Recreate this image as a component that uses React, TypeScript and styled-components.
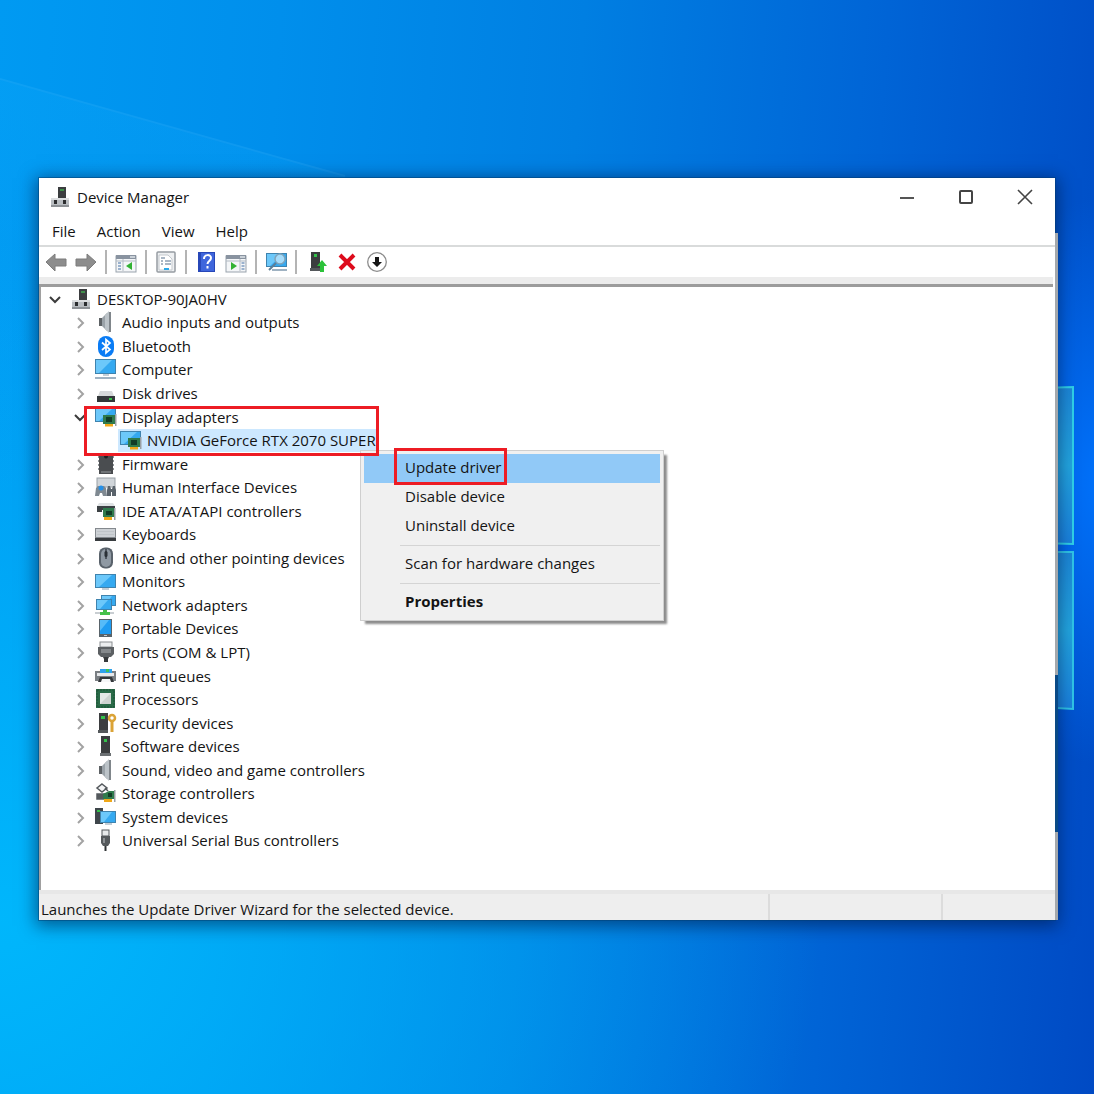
import React from "react";
import styled, { createGlobalStyle, css } from "styled-components";

const GlobalStyle = createGlobalStyle`
  *, *::before, *::after { box-sizing: border-box; }
  body {
    margin: 0;
    font-family: "Open Sans", "Noto Sans", sans-serif;
    font-size: 15px;
    line-height: 20px;
    color: #141414;
  }
  button { font: inherit; color: inherit; border: 0; background: none; padding: 0; margin: 0; }
  ul { list-style: none; margin: 0; padding: 0; }
`;

/* ---------- desktop ---------- */

const Desktop = styled.div`
  position: relative;
  display: flex;
  min-height: 100vh;
  padding: 178px 39px 174px;
  overflow: hidden;
  background:
    radial-gradient(ellipse 14% 26% at 101% 44%, rgba(0, 116, 255, 0.95), rgba(0, 108, 255, 0) 100%),
    radial-gradient(ellipse 75% 62% at 0% 84%, rgba(0, 184, 252, 0.95), rgba(0, 170, 250, 0) 100%),
    linear-gradient(94deg, #009af2 0%, #008fec 24%, #007fe2 50%, #0064d6 76%, #004ac4 100%);
`;

const Wallpaper = styled.svg`
  position: absolute;
  inset: 0;
  width: 100%;
  height: 100%;
`;

const Window = styled.main`
  position: relative;
  display: flex;
  flex-direction: column;
  flex: 1;
  min-width: 0;
  background: #ffffff;
  box-shadow: 0 0 0 1px rgba(0, 60, 110, 0.45), 0 3px 16px 3px rgba(0, 20, 60, 0.55);
`;

const BehindWindow = styled.div`
  position: absolute;
  top: 55px;
  right: -3px;
  bottom: 0;
  width: 3px;
  background: linear-gradient(#a4a8ac 0 442px, #0a4a86 442px 599px, #a4a8ac 599px);
`;

/* ---------- title bar and menu bar ---------- */

const TitleBar = styled.header`
  display: flex;
  align-items: center;
  height: 37px;
  padding-left: 10px;
`;

const Title = styled.h1`
  flex: 1;
  margin: 0 0 0 6px;
  font-size: 15px;
  font-weight: 400;
`;

const CaptionButton = styled.button`
  display: grid;
  place-items: center;
  width: 59px;
  height: 36px;

  &:last-child { margin-right: 1px; }
`;

const MenuBar = styled.nav`
  display: flex;
  gap: 21px;
  height: 32px;
  padding-left: 13px;
  border-bottom: 2px solid #d9dbdb;
`;

const MenuButton = styled.button`
  height: 31px;
`;

/* ---------- toolbar ---------- */

const Toolbar = styled.div`
  display: flex;
  align-items: center;
  height: 30px;
  padding-left: 2px;
`;

const ToolButton = styled.button`
  display: grid;
  place-items: center;
  width: 30px;
  height: 28px;
`;

const ToolSeparator = styled.span`
  width: 2px;
  height: 24px;
  margin: 0 4px;
  background: #b4b4b4;
`;

const Band = styled.div`
  height: 10px;
  margin-right: 2px;
  background: #ececec;
  border-bottom: 3px solid #9c9c9c;
`;

/* ---------- device tree ---------- */

const Panel = styled.section`
  flex: 1;
  border-left: 2px solid #a0a0a0;
`;

const Tree = styled.ul`
  display: flex;
  flex-direction: column;
  height: 565px;
`;

const Item = styled.li`
  flex: 1;
  display: flex;
`;

const Group = styled.li`
  position: relative;
  flex: 2;
  display: flex;
  flex-direction: column;
`;

const SubList = styled.ul`
  flex: 1;
  display: flex;
`;

const Row = styled.div<{ $level: number }>`
  flex: 1;
  display: flex;
  align-items: center;
  padding-left: ${(p) => 4 + p.$level * 25}px;
`;

const Toggle = styled.button`
  display: grid;
  place-items: center;
  width: 20px;
  height: 20px;
`;

const ToggleSpace = styled.span`
  width: 20px;
`;

const DeviceButton = styled.button<{ $selected?: boolean }>`
  display: flex;
  align-items: center;
  gap: 5px;
  height: 23px;
  margin-left: 3px;
  padding: 0 2px;
  white-space: nowrap;
  ${(p) => p.$selected && css`background: #cce8ff;`}
`;

const Glyph = styled.svg.attrs({ viewBox: "0 0 22 22", "aria-hidden": true })`
  width: 22px;
  height: 22px;
  flex: none;
`;

const redOutline = css`
  position: absolute;
  border: 3px solid #ed1c24;
  pointer-events: none;
`;

const AdapterOutline = styled.span`
  ${redOutline}
  top: 1px;
  left: 43px;
  width: 295px;
  height: 50px;
  z-index: 2;
`;

/* ---------- context menu ---------- */

const ContextMenu = styled.div`
  position: absolute;
  top: 45px;
  left: 319px;
  z-index: 1;
  width: 304px;
  padding: 3px;
  background: #f0f0f0;
  border: 1px solid #cfcfcf;
  box-shadow: 4px 4px 2px -1px rgba(0, 0, 0, 0.45);
`;

const Command = styled.button<{ $active?: boolean; $bold?: boolean }>`
  position: relative;
  display: block;
  width: 100%;
  height: 29px;
  padding: 0 0 2px 41px;
  text-align: left;
  font-weight: ${(p) => (p.$bold ? 700 : 400)};
  background: ${(p) => (p.$active ? "#91c9f7" : "transparent")};
`;

const CommandOutline = styled.span`
  ${redOutline}
  top: -6px;
  left: 30px;
  width: 113px;
  height: 37px;
`;

const Divider = styled.hr`
  height: 1px;
  margin: 4px 0 4px 36px;
  border: 0;
  background: #d4d4d4;
`;

/* ---------- status bar ---------- */

const StatusBar = styled.footer`
  display: flex;
  height: 30px;
  background: #eeeeee;
  border-top: 4px solid #e7e7e7;
`;

const StatusText = styled.output`
  flex: 1;
  padding: 5px 0 0 2px;
`;

const StatusCell = styled.div<{ $width: number }>`
  width: ${(p) => p.$width}px;
  border-left: 2px solid #dcdcdc;
`;

/* ---------- drawings ---------- */

const ServerIcon = () => (
  <Glyph>
    <rect x="9" y="1" width="8" height="11" fill="#3b3d3f" />
    <rect x="11" y="3" width="4" height="2" fill="#3f8f4a" />
    <path d="M2 12h18v8H2z" fill="#b9bdc1" />
    <path d="M2 12h18v2H2z" fill="#dcdee0" />
    <path d="M2 19h18v2H2z" fill="#8e9296" />
    <rect x="5" y="14" width="3" height="4" fill="#2b2d2f" />
    <rect x="14" y="14" width="3" height="4" fill="#2b2d2f" />
  </Glyph>
);

const SpeakerIcon = () => (
  <Glyph>
    <path d="M4 7h4v8H4z" fill="#5d6265" />
    <path d="M7 7l5-5v18l-5-5z" fill="#9aa2a8" />
    <path d="M10 4l4-4v22l-4-4z" fill="#bcc3c8" />
    <path d="M14 1h2v20h-2z" fill="#80868b" />
  </Glyph>
);

const BluetoothIcon = () => (
  <Glyph>
    <rect x="3" y="1" width="16" height="21" rx="8" fill="#0a7cf5" />
    <path d="M7 7.500l8 7-4 3.500V4.500l4 3.500-8 7" fill="none" stroke="#fff" strokeWidth="1.700" />
  </Glyph>
);

const screen = (x: number, y: number, w: number, h: number) => (
  <>
    <rect x={x} y={y} width={w} height={h} fill="#3f83ae" />
    <rect x={x + 1} y={y + 1} width={w - 2} height={h - 2} fill="#35a9f0" />
    <path d={`M${x + 1} ${y + 1}h${w - 5}L${x + 4} ${y + h - 1}H${x + 1}z`} fill="#6cc8fa" />
  </>
);

const ComputerIcon = () => (
  <Glyph>
    {screen(0, 1, 21, 15)}
    <path d="M8 16h6v2H8z" fill="#c3ced6" />
    <path d="M0 19h21v2H0z" fill="#9fb2c2" />
  </Glyph>
);

const DiskIcon = () => (
  <Glyph>
    <path d="M5 9h12l2 5H3z" fill="#d6d8da" />
    <path d="M2 14h18v6H2z" fill="#33373a" />
    <rect x="14" y="16" width="3" height="2" fill="#38c14b" />
  </Glyph>
);

const board = (
  <>
    <rect x="8" y="9" width="12" height="9" fill="#2f7a4c" />
    <rect x="11" y="11" width="6" height="5" fill="#123d27" />
    <path d="M20 8h1.500v12H20z" fill="#9aa0a5" />
    <rect x="10" y="18" width="8" height="2.500" fill="#f0a818" />
  </>
);

const AdapterIcon = () => (
  <Glyph>
    {screen(0, 2, 21, 14)}
    {board}
  </Glyph>
);

const FirmwareIcon = () => (
  <Glyph>
    <rect x="4" y="1" width="14" height="20" fill="#4a4d50" />
    <path d="M3 4h1M3 8h1M3 12h1M3 16h1M18 4h1M18 8h1M18 12h1M18 16h1" stroke="#8d9194" strokeWidth="2" />
    <circle cx="11" cy="3.500" r="2" fill="#1d1f20" />
    <path d="M6 19h10" stroke="#7c8083" strokeWidth="1.500" />
  </Glyph>
);

const HidIcon = () => (
  <Glyph>
    <rect x="2" y="2" width="18" height="9" fill="#d0d5d9" stroke="#9aa1a7" />
    <path d="M0 20l1-8 2-2h6l2 2 1 8H8l-1-3H5l-1 3z" fill="#7f8991" />
    <circle cx="6" cy="12" r="2.500" fill="#2490e8" />
    <path d="M13 10h2l1 3h1l1-3h2l1 4v6h-4v-4h-1v4h-4v-6z" fill="#5a636b" />
  </Glyph>
);

const IdeIcon = () => (
  <Glyph>
    <path d="M4 3h14l2 3H2z" fill="#dfe2e4" />
    <path d="M2 6h18v4H7v2H2z" fill="#3c4144" />
    <rect x="8" y="8" width="11" height="9" fill="#2f7a4c" />
    <rect x="11" y="11" width="6" height="4" fill="#123d27" />
    <path d="M19 8h1.500v12H19z" fill="#9aa0a5" />
    <rect x="9" y="17" width="8" height="3" fill="#f0a818" />
  </Glyph>
);

const KeyboardIcon = () => (
  <Glyph>
    <rect x="0" y="5" width="21" height="13" fill="#84898e" />
    <rect x="1" y="6" width="19" height="8" fill="#cdd1d5" />
    <path d="M2 8.500h17M2 11.500h17" stroke="#bfc4c8" />
    <path d="M0 15h21v3H0z" fill="#383c3f" />
  </Glyph>
);

const MouseIcon = () => (
  <Glyph>
    <rect x="4" y="0.500" width="14" height="21" rx="6" fill="#59626b" />
    <rect x="6" y="2" width="10" height="18" rx="5" fill="#8f99a3" />
    <path d="M11 2v10" stroke="#3a4148" strokeWidth="1.500" />
    <rect x="9.500" y="4" width="3" height="6" rx="1.500" fill="#2a3036" />
  </Glyph>
);

const MonitorIcon = () => (
  <Glyph>
    {screen(0, 4, 21, 14)}
    <path d="M7 18h7v2H7z" fill="#c3ced6" />
  </Glyph>
);

const NetworkIcon = () => (
  <Glyph>
    {screen(6, 1, 15, 11)}
    {screen(1, 5, 16, 11)}
    <path d="M8 16h4v2h3v3H5v-3h3z" fill="#45c14a" />
    <path d="M0 18h5v2H0zM15 18h4v2h-4z" fill="#c9ced2" />
  </Glyph>
);

const PortableIcon = () => (
  <Glyph>
    <rect x="4" y="2" width="13" height="18" fill="#59636a" />
    <rect x="5" y="3" width="11" height="14" fill="#1f9cf2" />
    <path d="M5 3h9L5 14z" fill="#56bbf8" />
    <rect x="9" y="18" width="3" height="1" fill="#c6cbd0" />
  </Glyph>
);

const PortsIcon = () => (
  <Glyph>
    <rect x="5" y="1" width="12" height="5" fill="#eceeef" stroke="#8a8e91" />
    <path d="M3 6h16v7l-3 3H6l-3-3z" fill="#5c6063" />
    <path d="M6 8h10v4H6z" fill="#85898c" />
    <path d="M8 16h6l-1 2v3H9v-3z" fill="#36393b" />
  </Glyph>
);

const PrinterIcon = () => (
  <Glyph>
    <path d="M5 4h12v4H5z" fill="#2fa2ec" />
    <rect x="11" y="4" width="3" height="3" fill="#3cc25c" />
    <path d="M1 6h4v3h12V6h4v10H0V6z" fill="#7a7f83" />
    <path d="M2 8h17v3H2z" fill="#e6e8ea" />
    <path d="M5 12h12l2 5H3z" fill="#34383b" />
    <path d="M7 14h8l1 3H6z" fill="#f6f7f8" />
  </Glyph>
);

const ProcessorIcon = () => (
  <Glyph>
    <rect x="1" y="1" width="19" height="19" fill="#2a6b48" />
    <rect x="2" y="2" width="17" height="17" fill="none" stroke="#1c5236" strokeDasharray="2 1" />
    <rect x="5" y="5" width="11" height="11" fill="#e6e9e7" />
    <path d="M5 16L16 5v11z" fill="#cfd4d1" />
  </Glyph>
);

const SecurityIcon = () => (
  <Glyph>
    <rect x="4" y="1" width="9" height="17" fill="#3b3d3f" />
    <rect x="6" y="4" width="4" height="3" fill="#33c24a" />
    <path d="M3 18h10v3H3z" fill="#54585b" />
    <circle cx="17" cy="6" r="3" fill="none" stroke="#dba336" strokeWidth="2.500" />
    <path d="M17 9v11" stroke="#dba336" strokeWidth="3" />
  </Glyph>
);

const SoftwareIcon = () => (
  <Glyph>
    <rect x="6" y="1" width="9" height="17" fill="#3b3d3f" />
    <rect x="9" y="4" width="3" height="3" fill="#33c24a" />
    <path d="M5 18h11v3H5z" fill="#6c7073" />
  </Glyph>
);

const StorageIcon = () => (
  <Glyph>
    <path d="M7 2l5 4-5 4-5-4z" fill="#f4f5f6" stroke="#54595d" strokeWidth="1.500" />
    <path d="M2 12h8v5H2zM10 6l3 3" fill="#54595d" stroke="#54595d" strokeWidth="1.500" />
    <path d="M8 12l6-3h5v8H8z" fill="#2f7a4c" />
    <rect x="13" y="11" width="4" height="4" fill="#123d27" />
    <path d="M19 8h1.500v12H19z" fill="#9aa0a5" />
    <rect x="9" y="17" width="8" height="3" fill="#f0a818" />
  </Glyph>
);

const SystemIcon = () => (
  <Glyph>
    <rect x="0" y="2" width="8" height="16" fill="#3f464b" />
    <rect x="2" y="4" width="3" height="2" fill="#33c24a" />
    {screen(5, 5, 16, 12)}
    <path d="M10 17h7v2h-7z" fill="#c3ced6" />
  </Glyph>
);

const UsbIcon = () => (
  <Glyph>
    <rect x="7" y="1" width="7" height="6" fill="#e8eaeb" stroke="#55595c" />
    <path d="M6 7h9v7l-2 3H8l-2-3z" fill="#55595c" />
    <path d="M8 9h2v5H8z" fill="#8d9194" />
    <path d="M9.500 17h2v5h-2z" fill="#2f3234" />
  </Glyph>
);

const Chevron = ({ open }: { open?: boolean }) => (
  <svg width="14" height="14" viewBox="0 0 14 14" aria-hidden="true">
    {open ? (
      <path d="M2 5l5 5 5-5" fill="none" stroke="#3c3c3c" strokeWidth="2" />
    ) : (
      <path d="M5 3l5 5-5 5" fill="none" stroke="#a3a3a3" strokeWidth="2" />
    )}
  </svg>
);

const Arrow = ({ forward }: { forward?: boolean }) => (
  <Glyph>
    <path
      d={forward ? "M21 11L12 3v5H1v7h11v5z" : "M1 11l9-8v5h11v7H10v5z"}
      fill="#8d8d8d"
      stroke="#7c7c7c"
    />
  </Glyph>
);

const PaneIcon = ({ forward }: { forward?: boolean }) => (
  <Glyph>
    <rect x="1" y="5" width="20" height="16" fill="#f4f6f8" stroke="#9aa3ad" />
    <path d="M1 4h20v4H1z" fill="#8993a0" />
    <path d="M15 6h5" stroke="#dfe4ea" strokeWidth="1.500" />
    {forward ? (
      <>
        <path d="M15 8v12M1 10h20" stroke="#b4bcc5" />
        <path d="M16.500 12h3M16.500 15h3M16.500 18h3" stroke="#7d9cc0" strokeWidth="1.500" />
        <path d="M6 11l6 4-6 4z" fill="#32b233" />
      </>
    ) : (
      <>
        <path d="M8 8v12M1 10h20" stroke="#b4bcc5" />
        <path d="M3 12h3M3 15h3M3 18h3" stroke="#7d9cc0" strokeWidth="1.500" />
        <path d="M17 11l-6 4 6 4z" fill="#32b233" />
      </>
    )}
  </Glyph>
);

const PropertiesIcon = () => (
  <Glyph>
    <rect x="2" y="1" width="18" height="20" rx="1" fill="#eef0f2" stroke="#969ca2" strokeWidth="1.500" />
    <path d="M4 4h9l4 4v11H4z" fill="#fff" stroke="#c3c8cd" />
    <path d="M6 7h4M6 10h2M10 10h6M6 13h2M10 13h6" stroke="#8fa0b2" strokeWidth="1.300" />
    <path d="M9 18h5" stroke="#29a9ea" strokeWidth="2" />
  </Glyph>
);

const HelpIcon = () => (
  <Glyph>
    <rect x="3" y="1" width="17" height="20" fill="#2747b8" />
    <rect x="6" y="2" width="13" height="18" fill="#3f66dc" />
    <path d="M9 8c0-5 7-5 7-1 0 3-3.500 3-3.500 6" fill="none" stroke="#fff" strokeWidth="2" />
    <rect x="11.500" y="15" width="2" height="2.500" fill="#fff" />
  </Glyph>
);

const ScanIcon = () => (
  <Glyph>
    {screen(1, 2, 21, 14)}
    <path d="M7 18h15v2H7z" fill="#9fb2c2" />
    <circle cx="15" cy="8" r="5" fill="#a5dcfb" stroke="#7fa3ba" strokeWidth="1.500" />
    <path d="M11 12l-7 7" stroke="#5d7f97" strokeWidth="2" />
  </Glyph>
);

const UpdateIcon = () => (
  <Glyph>
    <rect x="6" y="1" width="9" height="16" fill="#3b3d3f" />
    <rect x="9" y="3" width="3" height="3" fill="#33c24a" />
    <path d="M5 17h11v3H5z" fill="#54585b" />
    <path d="M17 9l5 6h-3v6h-4v-6h-3z" fill="#2cc23a" />
  </Glyph>
);

const RemoveIcon = () => (
  <Glyph>
    <path d="M5 4l14 14M19 4L5 18" stroke="#dd0b1c" strokeWidth="4" />
  </Glyph>
);

const DisableIcon = () => (
  <Glyph>
    <circle cx="12" cy="11" r="9.300" fill="#fff" stroke="#8c8c8c" strokeWidth="1.300" />
    <path d="M10 6h4v5h3l-5 5-5-5h3z" fill="#161616" />
  </Glyph>
);

/* ---------- data ---------- */

type Device = { name: string; Icon: React.FC };

const before: Device[] = [
  { name: "Audio inputs and outputs", Icon: SpeakerIcon },
  { name: "Bluetooth", Icon: BluetoothIcon },
  { name: "Computer", Icon: ComputerIcon },
  { name: "Disk drives", Icon: DiskIcon },
];

const after: Device[] = [
  { name: "Firmware", Icon: FirmwareIcon },
  { name: "Human Interface Devices", Icon: HidIcon },
  { name: "IDE ATA/ATAPI controllers", Icon: IdeIcon },
  { name: "Keyboards", Icon: KeyboardIcon },
  { name: "Mice and other pointing devices", Icon: MouseIcon },
  { name: "Monitors", Icon: MonitorIcon },
  { name: "Network adapters", Icon: NetworkIcon },
  { name: "Portable Devices", Icon: PortableIcon },
  { name: "Ports (COM & LPT)", Icon: PortsIcon },
  { name: "Print queues", Icon: PrinterIcon },
  { name: "Processors", Icon: ProcessorIcon },
  { name: "Security devices", Icon: SecurityIcon },
  { name: "Software devices", Icon: SoftwareIcon },
  { name: "Sound, video and game controllers", Icon: SpeakerIcon },
  { name: "Storage controllers", Icon: StorageIcon },
  { name: "System devices", Icon: SystemIcon },
  { name: "Universal Serial Bus controllers", Icon: UsbIcon },
];

const DeviceRow = ({ name, Icon, level = 1, open }: Device & { level?: number; open?: boolean }) => (
  <Row $level={level}>
    <Toggle aria-label={`Toggle ${name}`} aria-expanded={!!open}>
      <Chevron open={open} />
    </Toggle>
    <DeviceButton>
      <Icon />
      {name}
    </DeviceButton>
  </Row>
);

const renderItem = (device: Device) => (
  <Item key={device.name}>
    <DeviceRow {...device} />
  </Item>
);

export default function App() {
  return (
    <Desktop>
      <GlobalStyle />
      <Wallpaper viewBox="0 0 1094 1094" preserveAspectRatio="xMidYMid slice" aria-hidden="true">
        <defs>
          <linearGradient id="beam" x1="0" y1="0" x2="0" y2="1">
            <stop offset="0" stopColor="#14b0ff" stopOpacity="0.18" />
            <stop offset="1" stopColor="#14b0ff" stopOpacity="0" />
          </linearGradient>
          <linearGradient id="pane" x1="0" y1="0" x2="0" y2="1">
            <stop offset="0" stopColor="#1c86d6" />
            <stop offset="0.5" stopColor="#22a4de" />
            <stop offset="1" stopColor="#1a80dc" />
          </linearGradient>
        </defs>
        <path d="M0 79L345 176" stroke="#4cc0ff" strokeOpacity="0.18" strokeWidth="2" />
        <path d="M0 80L700 277V500H0z" fill="url(#beam)" />
        <path d="M1040 388l33-1v157l-33-1z" fill="url(#pane)" stroke="#2fd0e6" strokeWidth="2" />
        <path d="M1040 552h33v157l-33-2z" fill="url(#pane)" stroke="#2fc4e6" strokeWidth="2" />
      </Wallpaper>

      <Window>
        <BehindWindow />
        <TitleBar>
          <ServerIcon />
          <Title>Device Manager</Title>
          <CaptionButton aria-label="Minimize">
            <svg width="16" height="16" aria-hidden="true">
              <path d="M1 9h14" stroke="#555" strokeWidth="2" />
            </svg>
          </CaptionButton>
          <CaptionButton aria-label="Maximize">
            <svg width="16" height="16" aria-hidden="true">
              <rect x="2" y="2" width="12" height="12" rx="1" fill="none" stroke="#444" strokeWidth="2" />
            </svg>
          </CaptionButton>
          <CaptionButton aria-label="Close">
            <svg width="16" height="16" aria-hidden="true">
              <path d="M1 1l14 14M15 1L1 15" stroke="#444" strokeWidth="1.600" />
            </svg>
          </CaptionButton>
        </TitleBar>

        <MenuBar>
          {["File", "Action", "View", "Help"].map((m) => (
            <MenuButton key={m}>{m}</MenuButton>
          ))}
        </MenuBar>

        <Toolbar role="toolbar">
          <ToolButton aria-label="Back"><Arrow /></ToolButton>
          <ToolButton aria-label="Forward"><Arrow forward /></ToolButton>
          <ToolSeparator />
          <ToolButton aria-label="Show or hide console tree"><PaneIcon /></ToolButton>
          <ToolSeparator />
          <ToolButton aria-label="Properties"><PropertiesIcon /></ToolButton>
          <ToolSeparator />
          <ToolButton aria-label="Help"><HelpIcon /></ToolButton>
          <ToolButton aria-label="Show or hide action pane"><PaneIcon forward /></ToolButton>
          <ToolSeparator />
          <ToolButton aria-label="Scan for hardware changes"><ScanIcon /></ToolButton>
          <ToolSeparator />
          <ToolButton aria-label="Update driver"><UpdateIcon /></ToolButton>
          <ToolButton aria-label="Uninstall device"><RemoveIcon /></ToolButton>
          <ToolButton aria-label="Disable device"><DisableIcon /></ToolButton>
        </Toolbar>
        <Band />

        <Panel>
          <Tree>
            <Item>
              <DeviceRow name="DESKTOP-90JA0HV" Icon={ServerIcon} level={0} open />
            </Item>
            {before.map(renderItem)}
            <Group>
              <DeviceRow name="Display adapters" Icon={AdapterIcon} open />
              <SubList>
                <Item>
                  <Row $level={2}>
                    <ToggleSpace />
                    <DeviceButton $selected>
                      <AdapterIcon />
                      NVIDIA GeForce RTX 2070 SUPER
                    </DeviceButton>
                  </Row>
                </Item>
              </SubList>
              <AdapterOutline />
              <ContextMenu>
                <Command $active>
                  Update driver
                  <CommandOutline />
                </Command>
                <Command>Disable device</Command>
                <Command>Uninstall device</Command>
                <Divider />
                <Command>Scan for hardware changes</Command>
                <Divider />
                <Command $bold>Properties</Command>
              </ContextMenu>
            </Group>
            {after.map(renderItem)}
          </Tree>
        </Panel>

        <StatusBar>
          <StatusText>Launches the Update Driver Wizard for the selected device.</StatusText>
          <StatusCell $width={173} />
          <StatusCell $width={114} />
        </StatusBar>
      </Window>
    </Desktop>
  );
}
